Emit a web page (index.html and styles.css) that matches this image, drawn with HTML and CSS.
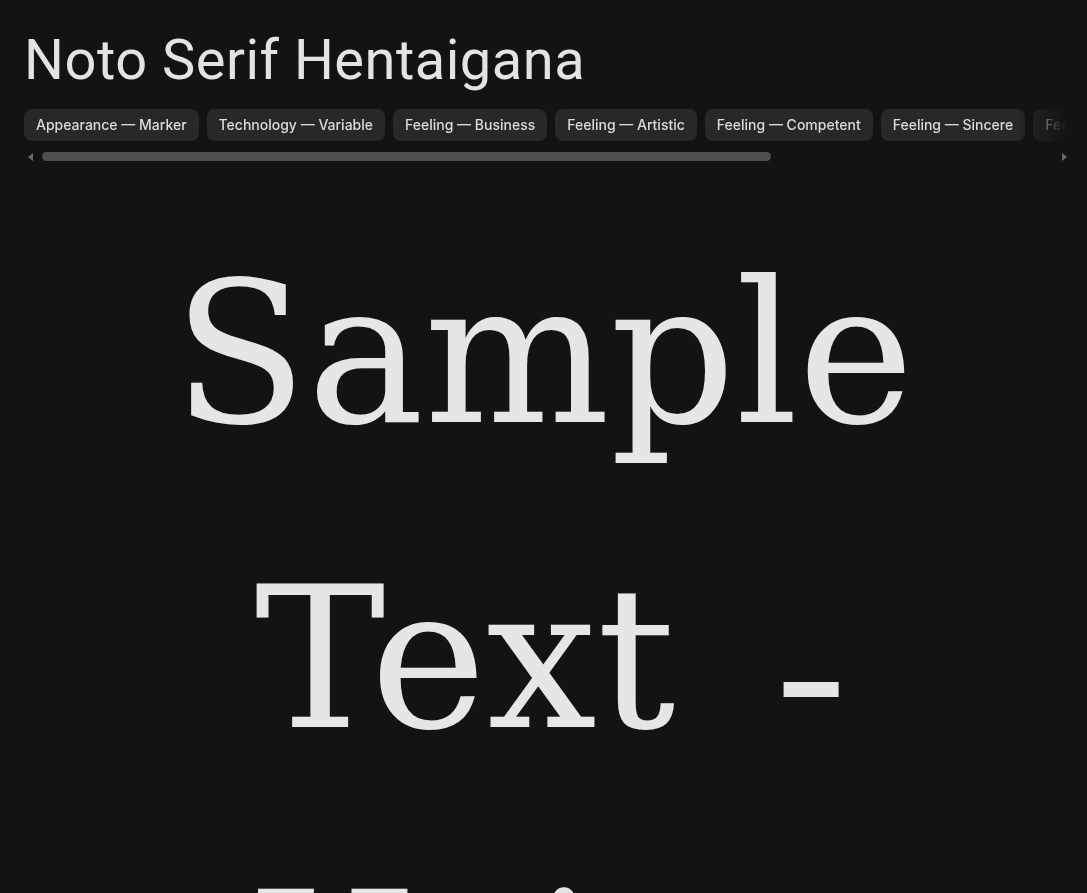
FILE: index.html
```html
<!DOCTYPE html>
<html lang="en">
<head>
<meta charset="utf-8">
<title>Noto Serif Hentaigana</title>
<link rel="stylesheet" href="styles.css">
</head>
<body>
<main class="page">
  <h1 class="title">Noto Serif Hentaigana</h1>
  <div class="tags-wrap">
    <div class="tags">
      <span class="tag">Appearance — Marker</span>
      <span class="tag">Technology — Variable</span>
      <span class="tag">Feeling — Business</span>
      <span class="tag">Feeling — Artistic</span>
      <span class="tag">Feeling — Competent</span>
      <span class="tag">Feeling — Sincere</span>
      <span class="tag">Feeling — Calm</span>
    </div>
    <div class="scrollbar">
      <span class="arrow arrow-left"></span>
      <div class="track"><div class="thumb"></div></div>
      <span class="arrow arrow-right"></span>
    </div>
  </div>
  <p class="sample">Sample Text <span class="dash">-</span> Heian</p>
</main>
</body>
</html>
```

FILE: styles.css
```css
html, body {
  margin: 0;
  padding: 0;
  background: #131313;
  overflow: hidden;
}
.page {
  padding: 0 24px;
  color: #e3e3e3;
}
.title {
  margin: 0;
  padding-top: 26px;
  font-family: "Roboto", "Open Sans", sans-serif;
  font-weight: 400;
  font-size: 56px;
  line-height: 68px;
  color: #e3e3e3;
  letter-spacing: 0.5px;
}
.tags-wrap {
  margin-top: 15px;
  margin-right: -24px;
}
.tags {
  display: flex;
  gap: 8px;
  overflow: hidden;
  white-space: nowrap;
  -webkit-mask-image: linear-gradient(to right, #000 calc(100% - 70px), transparent calc(100% - 20px));
  mask-image: linear-gradient(to right, #000 calc(100% - 70px), transparent calc(100% - 20px));
}
.tag {
  flex: none;
  height: 32px;
  line-height: 32px;
  padding: 0 12px;
  border-radius: 8px;
  background: #282828;
  color: #dcdcdc;
  font-family: "Inter", "Roboto", sans-serif;
  font-weight: 500;
  font-size: 14px;
}
.scrollbar {
  display: flex;
  align-items: center;
  height: 10px;
  margin-top: 11px;
  padding-right: 20px;
}
.arrow {
  width: 0;
  height: 0;
  border-top: 4px solid transparent;
  border-bottom: 4px solid transparent;
}
.arrow-left {
  border-right: 5px solid #6a6a6a;
  margin-left: 4px;
  margin-right: 9px;
}
.arrow-right {
  border-left: 5px solid #6a6a6a;
  margin-left: 9px;
}
.track {
  flex: 1;
  height: 10px;
}
.thumb {
  width: 729px;
  height: 9px;
  border-radius: 5px;
  background: #4e4e4e;
}
.sample {
  margin: 40px 0 0;
  text-align: center;
  font-family: "DejaVu Serif", serif;
  font-size: 196px;
  line-height: 305px;
  color: #e6e6e6;
}
.dash {
  display: inline-block;
  margin-left: 40px;
  margin-right: -12px;
  line-height: 1;
  vertical-align: -15px;
  transform: scaleX(1.12);
}
```
